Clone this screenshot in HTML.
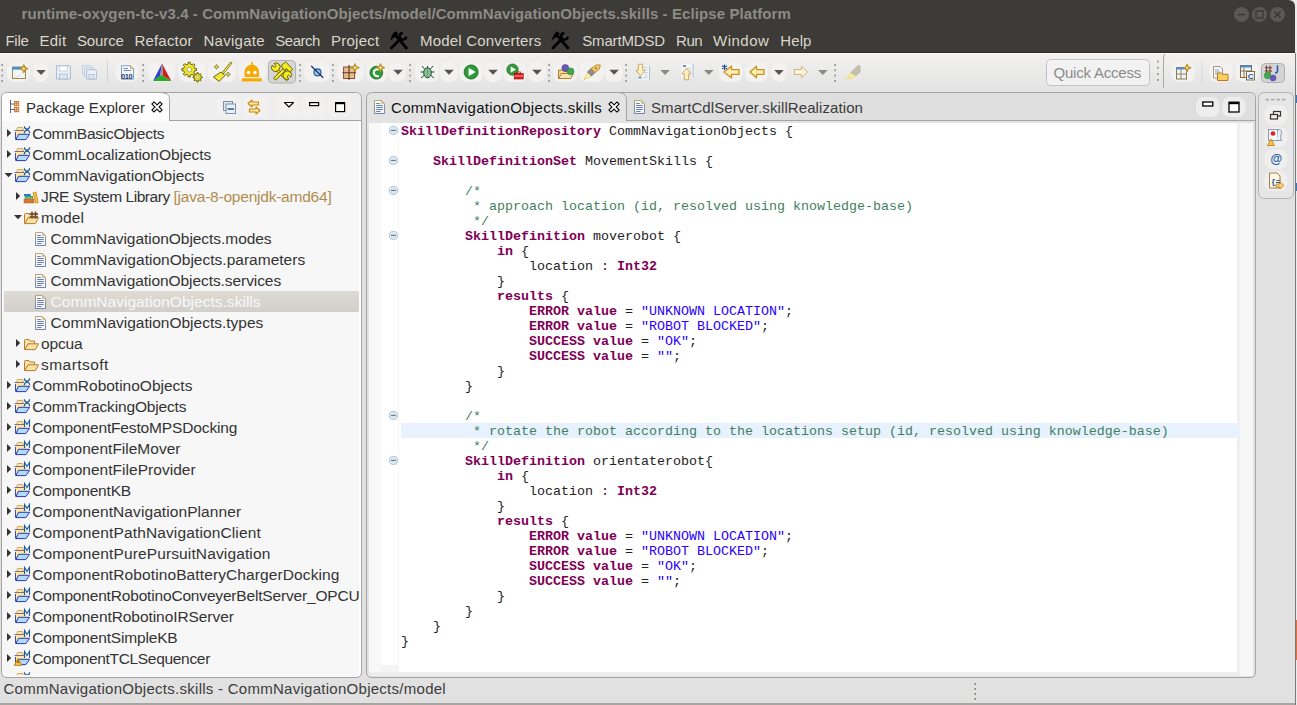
<!DOCTYPE html>
<html><head><meta charset="utf-8"><title>Eclipse</title>
<style>
html,body{margin:0;padding:0;width:1297px;height:705px;overflow:hidden;background:#e1e1e1}
svg{display:block}

</style></head><body>
<svg width="1297" height="705" viewBox="0 0 1297 705">
<rect x="0" y="0" width="1297" height="705" fill="#ececec"/>
<rect x="1295" y="95" width="2" height="8" fill="#3b78c0"/>
<rect x="1295" y="183" width="2" height="8" fill="#3b78c0"/>
<rect x="1295" y="620" width="2" height="40" fill="#e07040"/>
<path d="M0 0 H1288 Q1295 0 1295 7 V705 H0 Z" fill="#e1e1e1"/>
<path d="M0 0 H1288 Q1295 0 1295 7 V53 H0 Z" fill="#3c3b37"/>
<rect x="0" y="52" width="1295" height="1" fill="#2e2d2a"/>
<circle cx="1241.5" cy="14.5" r="7.5" fill="#5a5955"/>
<circle cx="1259.5" cy="14.5" r="7.5" fill="#5a5955"/>
<circle cx="1277.5" cy="14.5" r="7.5" fill="#5a5955"/>
<path d="M1238 14.5 H1245" stroke="#35342f" stroke-width="1.4"/>
<rect x="1256" y="11" width="7" height="7" fill="none" stroke="#35342f" stroke-width="1.2"/>
<path d="M1274.5 11.5 L1280.5 17.5 M1280.5 11.5 L1274.5 17.5" stroke="#35342f" stroke-width="1.4"/>
<defs><linearGradient id="tbg" x1="0" y1="0" x2="0" y2="1"><stop offset="0" stop-color="#f2f1f0"/><stop offset="1" stop-color="#e3e3e3"/></linearGradient></defs>
<rect x="0" y="53" width="1295" height="39" fill="url(#tbg)"/>
<rect x="0" y="53" width="1295" height="1" fill="#fafafa"/>
<path d="M1.5 98.5 Q1.5 92.5 7.5 92.5 H355.5 Q361.5 92.5 361.5 98.5 V672 Q361.5 677.5 356 677.5 H7 Q1.5 677.5 1.5 672 Z" fill="#f7f7f7" stroke="#a4a4a4"/>
<path d="M2 98.5 Q2 93 7.5 93 H355.5 Q361 93 361 98.5 V120 H2 Z" fill="#eeeeee"/>
<rect x="2" y="120" width="359" height="1" fill="#a4a4a4"/>
<path d="M2 121 V98.5 Q2 93 7.5 93 H163 Q169.5 93 169.5 99.5 V121 Z" fill="#fdfdfd"/>
<path d="M169.5 121 V99.5 Q169.5 93 163 93" fill="none" stroke="#a4a4a4"/>
<defs><linearGradient id="sel" x1="0" y1="0" x2="0" y2="1"><stop offset="0" stop-color="#dedbd7"/><stop offset="1" stop-color="#d2cfcb"/></linearGradient></defs>
<rect x="4" y="291" width="355" height="21" fill="url(#sel)"/>
<path d="M366.5 98.5 Q366.5 92.5 372.5 92.5 H1249.5 Q1255.5 92.5 1255.5 98.5 V672 Q1255.5 677.5 1250 677.5 H372 Q366.5 677.5 366.5 672 Z" fill="#e3e3e3" stroke="#a4a4a4"/>
<path d="M626.5 121 V99.5 Q626.5 93 633 93 H1249.5 Q1255 93 1255 98.5 V120 Z" fill="#dedede"/>
<path d="M626.5 120.5 V99.5 Q626.5 93 620 93" fill="none" stroke="#a4a4a4"/>
<rect x="626" y="120" width="629" height="1" fill="#a4a4a4"/>
<rect x="369" y="123" width="884" height="549" fill="#ffffff"/>
<rect x="369" y="123" width="12" height="549" fill="#f8f8f8"/>
<rect x="381" y="665" width="18" height="7" fill="#f4f4f4"/>
<rect x="398" y="123" width="1" height="542" fill="#f6f6f6"/>
<rect x="369" y="672" width="884" height="4" fill="#ededed"/>
<rect x="1237" y="123" width="3" height="549" fill="#efefef"/>
<rect x="1240" y="123" width="13" height="553" fill="#f7f7f7"/>
<rect x="401" y="423" width="839" height="15" fill="#e8f2fe"/>
<path d="M1258.5 98.5 Q1258.5 92.5 1264.5 92.5 H1287.5 Q1293.5 92.5 1293.5 98.5 V192 Q1293.5 198.5 1287 198.5 H1265 Q1258.5 198.5 1258.5 192 Z" fill="#e6e6e6" stroke="#b4b4b4"/>
<rect x="1295" y="53" width="1" height="652" fill="#7a7a7a"/>
<rect x="359" y="121" width="2" height="552" fill="#ffffff"/>
<rect x="0" y="703" width="1295" height="2" fill="#a8a5a1"/>
<rect x="974.5" y="683" width="1.5" height="2" fill="#8a877f"/>
<rect x="974.5" y="688" width="1.5" height="2" fill="#8a877f"/>
<rect x="974.5" y="693" width="1.5" height="2" fill="#8a877f"/>
<rect x="974.5" y="698" width="1.5" height="2" fill="#8a877f"/>
<defs><linearGradient id="docg" x1="0" y1="0" x2="0" y2="1"><stop offset="0" stop-color="#b8a868"/><stop offset="1" stop-color="#7282aa"/></linearGradient></defs><g transform="translate(390,31)">
<line x1="1.4" y1="17" x2="9.8" y2="8.6" stroke="#000" stroke-width="2.8" stroke-linecap="round"/>
<path d="M16.29 5.59 A3.3 3.3 0 1 1 12.71 2.01" fill="none" stroke="#000" stroke-width="2.3"/>
<line x1="6.8" y1="5.6" x2="16.4" y2="17" stroke="#000" stroke-width="2.8" stroke-linecap="round"/>
<path d="M0.3 9.8 Q1.2 3.5 5.4 0.2 L8.4 2.6 L6.6 5.6 Q3 6.5 0.3 9.8 Z" fill="#000"/>
</g><g transform="translate(551.5,31)">
<line x1="1.4" y1="17" x2="9.8" y2="8.6" stroke="#000" stroke-width="2.8" stroke-linecap="round"/>
<path d="M16.29 5.59 A3.3 3.3 0 1 1 12.71 2.01" fill="none" stroke="#000" stroke-width="2.3"/>
<line x1="6.8" y1="5.6" x2="16.4" y2="17" stroke="#000" stroke-width="2.8" stroke-linecap="round"/>
<path d="M0.3 9.8 Q1.2 3.5 5.4 0.2 L8.4 2.6 L6.6 5.6 Q3 6.5 0.3 9.8 Z" fill="#000"/>
</g><rect x="1.4500000000000002" y="64.0" width="1.5" height="2" rx="0.5" fill="#8c8a84"/><rect x="1.4500000000000002" y="69.3" width="1.5" height="2" rx="0.5" fill="#8c8a84"/><rect x="1.4500000000000002" y="74.6" width="1.5" height="2" rx="0.5" fill="#8c8a84"/><rect x="1.4500000000000002" y="79.9" width="1.5" height="2" rx="0.5" fill="#8c8a84"/><rect x="7" y="62" width="23.2" height="20" rx="8" fill="#f3f2f1"/><rect x="12.5" y="67" width="13" height="11.5" fill="#eef6fc" stroke="#a08a50" stroke-width="1"/><rect x="12.5" y="67" width="13" height="2.6" fill="#3d8fd8"/><path d="M14 77.5 Q20 77 22 72" stroke="#f0e0b0" stroke-width="1" fill="none"/><path d="M23.8 64.80000000000001 L24.856 67.644 L27.700000000000003 68.7 L24.856 69.756 L23.8 72.6 L22.744 69.756 L19.9 68.7 L22.744 67.644 Z" fill="#fff6c0" stroke="#c09020" stroke-width="1.3" stroke-linejoin="round"/><rect x="33" y="62" width="15.600000000000001" height="20" rx="8" fill="#f3f2f1"/><path d="M36.3 70 H45.9 L41.099999999999994 75 Z" fill="#555555"/><path d="M56.6 65.7 H69.6 L70.4 66.5 V79 H56.6 Z" fill="#eef2f8" stroke="#a9b9d3" stroke-width="1"/><rect x="59.5" y="66" width="8" height="5" fill="#ffffff" stroke="#c0cce0" stroke-width="0.8"/><rect x="59.5" y="74" width="8" height="5" fill="#dde5f0" stroke="#a9b9d3" stroke-width="0.8"/><path d="M82.5 65.7 H91 L92 67 V74 H82.5 Z" fill="#eef2f8" stroke="#b8c6dc" stroke-width="0.9"/><path d="M84.5 67.7 H93 L94 69 V76 H84.5 Z" fill="#eef2f8" stroke="#b8c6dc" stroke-width="0.9"/><path d="M86.6 69.7 H95.5 L96.4 70.5 V79 H86.6 Z" fill="#eef2f8" stroke="#a9b9d3" stroke-width="1"/><rect x="89" y="74.5" width="5" height="4.5" fill="#dde5f0" stroke="#a9b9d3" stroke-width="0.8"/><rect x="107" y="61" width="1" height="21.5" fill="#d3d3d3"/><rect x="115" y="62" width="23.69999999999999" height="20" rx="8" fill="#f3f2f1"/><path d="M121.5 65.7 H130.5 L133.5 68.7 V79.2 H121.5 Z" fill="#f4f8fc" stroke="#8aa0c0" stroke-width="1"/><path d="M130.5 65.7 V68.7 H133.5" fill="#e8d090" stroke="#c0a060" stroke-width="0.8"/><path d="M123.5 68.5 H128 M123.5 70.5 H131" stroke="#6080b0" stroke-width="0.9"/><text x="121" y="79" font-family="Liberation Sans" font-size="7.5px" font-weight="700" fill="#1a3a70" letter-spacing="-0.4">010</text><rect x="142.45" y="64.0" width="1.5" height="2" rx="0.5" fill="#8c8a84"/><rect x="142.45" y="69.3" width="1.5" height="2" rx="0.5" fill="#8c8a84"/><rect x="142.45" y="74.6" width="1.5" height="2" rx="0.5" fill="#8c8a84"/><rect x="142.45" y="79.9" width="1.5" height="2" rx="0.5" fill="#8c8a84"/><rect x="148" y="62" width="27" height="20" rx="8" fill="#f3f2f1"/><path d="M162 63.5 L153 81 L160 76 Z" fill="#3040c8"/><path d="M162 63.5 L171.3 81 L163 76 Z" fill="#d02020"/><path d="M153 81 L171.3 81 L163 76 L160 76 Z" fill="#20b020"/><path d="M162 63.5 L160 76 L163 76 Z" fill="#909090"/><rect x="178" y="62" width="28" height="20" rx="8" fill="#f3f2f1"/><path d="M194.67 68.40 L196.53 68.59 L196.53 70.61 L194.67 70.80 L193.92 72.62 L195.10 74.07 L193.67 75.50 L192.22 74.32 L190.40 75.07 L190.21 76.93 L188.19 76.93 L188.00 75.07 L186.18 74.32 L184.73 75.50 L183.30 74.07 L184.48 72.62 L183.73 70.80 L181.87 70.61 L181.87 68.59 L183.73 68.40 L184.48 66.58 L183.30 65.13 L184.73 63.70 L186.18 64.88 L188.00 64.13 L188.19 62.27 L190.21 62.27 L190.40 64.13 L192.22 64.88 L193.67 63.70 L195.10 65.13 L193.92 66.58 Z" fill="#ece430" stroke="#5a5400" stroke-width="0.9" stroke-linejoin="round"/><circle cx="189.2" cy="69.6" r="2.3" fill="#ffffff" stroke="#8a8400" stroke-width="0.6"/><path d="M200.92 76.57 L202.16 76.67 L202.16 77.93 L200.92 78.03 L200.46 79.13 L201.27 80.08 L200.38 80.97 L199.43 80.16 L198.33 80.62 L198.23 81.86 L196.97 81.86 L196.87 80.62 L195.77 80.16 L194.82 80.97 L193.93 80.08 L194.74 79.13 L194.28 78.03 L193.04 77.93 L193.04 76.67 L194.28 76.57 L194.74 75.47 L193.93 74.52 L194.82 73.63 L195.77 74.44 L196.87 73.98 L196.97 72.74 L198.23 72.74 L198.33 73.98 L199.43 74.44 L200.38 73.63 L201.27 74.52 L200.46 75.47 Z" fill="#ece430" stroke="#5a5400" stroke-width="0.9" stroke-linejoin="round"/><circle cx="197.6" cy="77.3" r="1.4" fill="#f4f4e0" stroke="#8a8400" stroke-width="0.5"/><rect x="208" y="62" width="28" height="20" rx="8" fill="#f3f2f1"/><path d="M231 63 L222.5 73.5" stroke="#5a5400" stroke-width="2.4" stroke-linecap="round"/><path d="M231 63 L222.5 73.5" stroke="#f0e840" stroke-width="1.2" stroke-linecap="round"/><path d="M221 72 L225 75.5 L219 81.5 L213.5 77 Z" fill="#f0e840" stroke="#5a5400" stroke-width="0.9"/><path d="M216.5 64.5 l0.8 1.6 1.6 0.8 -1.6 0.8 -0.8 1.6 -0.8 -1.6 -1.6 -0.8 1.6 -0.8 Z M228 72 l0.8 1.6 1.6 0.8 -1.6 0.8 -0.8 1.6 -0.8 -1.6 -1.6 -0.8 1.6 -0.8 Z" fill="#f0e840" stroke="#5a5400" stroke-width="0.6"/><rect x="238" y="62" width="28" height="20" rx="8" fill="#f3f2f1"/><rect x="251" y="62" width="1.6" height="3" fill="#f7a900"/><path d="M244.5 77 V72 A7.3 7.3 0 0 1 259.1 72 V77 Z" fill="#f7a900"/><rect x="241.8" y="78.3" width="20" height="3.2" fill="#f7a900"/><circle cx="248.5" cy="72.5" r="1.8" fill="#fff"/><circle cx="255" cy="72.5" r="1.8" fill="#fff"/><rect x="268.5" y="60.5" width="27" height="22.5" rx="4" fill="#d6d6d6" stroke="#b0b0b0"/><g stroke="#5a5400" stroke-width="0.9" fill="#f4ec20" stroke-linejoin="round"><path d="M277 68.3 L288.3 79.2 L286.6 80.8 L275.4 69.9 Z"/><path d="M272.2 65.2 L274.4 67.3 L276.2 65.6 L274 63.5 A4 4 0 0 1 279.5 69 L277.5 71 A4 4 0 0 1 272.2 65.2 Z"/><path d="M290.8 77.2 L288.6 75.1 L286.8 76.8 L289 78.9 A4 4 0 0 1 283.5 73.4 L285.5 71.4 A4 4 0 0 1 290.8 77.2 Z"/></g><g stroke="#5a5400" stroke-width="0.9" fill="#f4ec20" stroke-linejoin="round"><path d="M273.6 78.2 L284.2 67.6 L286.2 69.6 L275.6 80.2 Z"/><path d="M281.2 65.6 L285.6 61.8 L292.6 69.2 L290 72.2 L286.6 68.8 L284.2 70.4 Z"/></g><rect x="299.35" y="64.0" width="1.5" height="2" rx="0.5" fill="#8c8a84"/><rect x="299.35" y="69.3" width="1.5" height="2" rx="0.5" fill="#8c8a84"/><rect x="299.35" y="74.6" width="1.5" height="2" rx="0.5" fill="#8c8a84"/><rect x="299.35" y="79.9" width="1.5" height="2" rx="0.5" fill="#8c8a84"/><rect x="304" y="62" width="26" height="20" rx="8" fill="#f3f2f1"/><circle cx="317.5" cy="72.4" r="3.4" fill="#a8cce4" stroke="#2a6aa8" stroke-width="1.4"/><path d="M311.2 66 L323.2 77.8" stroke="#1a2a70" stroke-width="1.2"/><rect x="332.15" y="64.0" width="1.5" height="2" rx="0.5" fill="#8c8a84"/><rect x="332.15" y="69.3" width="1.5" height="2" rx="0.5" fill="#8c8a84"/><rect x="332.15" y="74.6" width="1.5" height="2" rx="0.5" fill="#8c8a84"/><rect x="332.15" y="79.9" width="1.5" height="2" rx="0.5" fill="#8c8a84"/><rect x="337" y="62" width="27" height="20" rx="8" fill="#f3f2f1"/><rect x="343.6" y="67" width="11" height="11.5" fill="#e0c090" stroke="#8a4a30" stroke-width="1"/><path d="M349 65 V80 M342.5 72.7 H356" stroke="#6a3020" stroke-width="1.1"/><path d="M355 63.800000000000004 L356.056 66.644 L358.90000000000003 67.7 L356.056 68.756 L355 71.6 L353.944 68.756 L351.09999999999997 67.7 L353.944 66.644 Z" fill="#fff6c0" stroke="#c09020" stroke-width="1.3" stroke-linejoin="round"/><rect x="366" y="62" width="22" height="20" rx="8" fill="#f3f2f1"/><circle cx="376.3" cy="72.7" r="6.4" fill="#2e9a3a" stroke="#1a6a24" stroke-width="0.8"/><path d="M378.9 69.6 A3.5 3.5 0 1 0 378.9 75.8" fill="none" stroke="#ffffff" stroke-width="2"/><path d="M380.5 63.800000000000004 L381.556 66.644 L384.40000000000003 67.7 L381.556 68.756 L380.5 71.6 L379.444 68.756 L376.59999999999997 67.7 L379.444 66.644 Z" fill="#fff6c0" stroke="#c09020" stroke-width="1.3" stroke-linejoin="round"/><rect x="389" y="62" width="17" height="20" rx="8" fill="#f3f2f1"/><path d="M393.2 69.8 H402.8 L398.0 74.8 Z" fill="#555555"/><rect x="409.25" y="64.0" width="1.5" height="2" rx="0.5" fill="#8c8a84"/><rect x="409.25" y="69.3" width="1.5" height="2" rx="0.5" fill="#8c8a84"/><rect x="409.25" y="74.6" width="1.5" height="2" rx="0.5" fill="#8c8a84"/><rect x="409.25" y="79.9" width="1.5" height="2" rx="0.5" fill="#8c8a84"/><rect x="415" y="62" width="24" height="20" rx="8" fill="#f3f2f1"/><g stroke="#1a5040" stroke-width="1" fill="none"><path d="M422 66 L424.5 69 M433 66 L430.5 69 M420.5 72 H424 M434.5 72 H431 M421 78 L424 75.5 M434 78 L431 75.5 M427.5 66 V68"/></g><ellipse cx="427.5" cy="72.8" rx="3.8" ry="5" fill="#90c090" stroke="#1a5040" stroke-width="1"/><path d="M427.5 68 V77.5" stroke="#5a8a60" stroke-width="0.7"/><rect x="440" y="62" width="18" height="20" rx="8" fill="#f3f2f1"/><path d="M444.2 69.8 H453.8 L449.0 74.8 Z" fill="#555555"/><rect x="459" y="62" width="24" height="20" rx="8" fill="#f3f2f1"/><circle cx="471.1" cy="72" r="7" fill="#2e9a3a" stroke="#1a6a24" stroke-width="0.9"/><path d="M468.6 67.7 L475.6 72 L468.6 76.3 Z" fill="#ffffff"/><rect x="484" y="62" width="18" height="20" rx="8" fill="#f3f2f1"/><path d="M488.2 69.8 H497.8 L493.0 74.8 Z" fill="#555555"/><rect x="503" y="62" width="24" height="20" rx="8" fill="#f3f2f1"/><circle cx="512.5" cy="69.6" r="5.6" fill="#2e9a3a" stroke="#1a6a24" stroke-width="0.8"/><path d="M510.6 66.4 L516 69.6 L510.6 72.8 Z" fill="#ffffff"/><rect x="514.2" y="73.5" width="9" height="5.5" fill="#e02020" stroke="#a00000" stroke-width="0.6"/><rect x="516.8" y="72" width="3.8" height="2" fill="none" stroke="#c01010" stroke-width="0.8"/><path d="M514.5 76 H523" stroke="#ffffff" stroke-width="0.6"/><rect x="528" y="62" width="18" height="20" rx="8" fill="#f3f2f1"/><path d="M532.2 69.8 H541.8000000000001 L537.0 74.8 Z" fill="#555555"/><rect x="548.35" y="64.0" width="1.5" height="2" rx="0.5" fill="#8c8a84"/><rect x="548.35" y="69.3" width="1.5" height="2" rx="0.5" fill="#8c8a84"/><rect x="548.35" y="74.6" width="1.5" height="2" rx="0.5" fill="#8c8a84"/><rect x="548.35" y="79.9" width="1.5" height="2" rx="0.5" fill="#8c8a84"/><rect x="553" y="62" width="25" height="20" rx="8" fill="#f3f2f1"/><path d="M558.5 70 H563 L564.5 71.5 H570 V78.5 H558.5 Z" fill="#f0d890" stroke="#b07a30" stroke-width="1"/><path d="M558.5 78.5 L561.5 73.5 H573.5 L570.5 78.5 Z" fill="#f8e4a8" stroke="#b07a30" stroke-width="1"/><circle cx="565.3" cy="68" r="3.4" fill="#6a58b8" stroke="#4a3890" stroke-width="0.6"/><circle cx="570.5" cy="71.3" r="3.4" fill="#40a850" stroke="#208030" stroke-width="0.6"/><rect x="579" y="62" width="25" height="20" rx="8" fill="#f3f2f1"/><path d="M584 79.5 L588 72.5 L591.5 76 Z" fill="#fff8c0" stroke="#e8c040" stroke-width="0.8"/><path d="M587.5 72 L591 68.5 L595 72.5 L591.5 76 Z" fill="#909090" stroke="#606060" stroke-width="0.7"/><path d="M591 68.5 L596.5 64.8 L600.3 65 L599.5 69 L595 72.5 Z" fill="#f0c860" stroke="#b08020" stroke-width="0.8"/><circle cx="596" cy="68.3" r="0.8" fill="#204080"/><rect x="605" y="62" width="18" height="20" rx="8" fill="#f3f2f1"/><path d="M609.3 69.8 H618.9 L614.0999999999999 74.8 Z" fill="#555555"/><rect x="625.45" y="64.0" width="1.5" height="2" rx="0.5" fill="#8c8a84"/><rect x="625.45" y="69.3" width="1.5" height="2" rx="0.5" fill="#8c8a84"/><rect x="625.45" y="74.6" width="1.5" height="2" rx="0.5" fill="#8c8a84"/><rect x="625.45" y="79.9" width="1.5" height="2" rx="0.5" fill="#8c8a84"/><rect x="638.5" y="66" width="11" height="13.5" fill="#f4f6f8"/><path d="M649.5 66 V79.5" stroke="#a8b8c8" stroke-width="0.9"/><path d="M643.5 67.5 H647.5 M644 70 H647.5 M644 72.5 H647.5 M644 75 H647.5 M643 77.5 H647.5" stroke="#c0cad8" stroke-width="0.9"/><rect x="638.5" y="76.5" width="3" height="2" fill="#7090c0"/><path d="M638.3 64.2 H642.7 V70.2 H645 L640.5 75.8 L636 70.2 H638.3 Z" fill="#fff0c8" stroke="#d0a860" stroke-width="1"/><path d="M660.3 70 H669.9 L665.0999999999999 75 Z" fill="#8a8a8a"/><rect x="681.5" y="64" width="11.5" height="13.5" fill="#f4f6f8"/><path d="M693 64 V77.5" stroke="#a8b8c8" stroke-width="0.9"/><path d="M686 68.5 H691 M686 71 H691 M686 73.5 H691 M686 76 H691" stroke="#c0cad8" stroke-width="0.9"/><rect x="683" y="65" width="3" height="2" fill="#7090c0"/><path d="M684.3 79.8 H688.7 V73.8 H691 L686.5 68.2 L682 73.8 H684.3 Z" fill="#fff0c8" stroke="#d0a860" stroke-width="1"/><path d="M704 70 H713.6 L708.8 75 Z" fill="#8a8a8a"/><rect x="719" y="62" width="23.399999999999977" height="20" rx="8" fill="#f3f2f1"/><path d="M739 69.7 H731.5 V66.2 L723.8 72 L731.5 77.8 V74.3 H739 Z" fill="#fff0b0" stroke="#c89020" stroke-width="1.3" stroke-linejoin="round"/><path d="M724.5 64.5 V70 M722 65.8 L727 68.8 M727 65.8 L722 68.8" stroke="#1a4a90" stroke-width="1.1"/><rect x="745" y="62" width="23" height="20" rx="8" fill="#f3f2f1"/><path d="M764 69.7 H756.5 V66.2 L750 72 L756.5 77.8 V74.3 H764 Z" fill="#fff0b0" stroke="#c89020" stroke-width="1.3" stroke-linejoin="round"/><rect x="771.4" y="62" width="15.100000000000023" height="20" rx="8" fill="#f3f2f1"/><path d="M774.2 69.9 H783.8000000000001 L779.0 74.9 Z" fill="#555555"/><path d="M794.5 69.5 H801.5 V66.5 L807.5 72 L801.5 77.5 V74.5 H794.5 Z" fill="#fbf3dc" stroke="#d4b47c" stroke-width="1" stroke-linejoin="round"/><path d="M818 70 H827.6 L822.8 75 Z" fill="#8a8a8a"/><rect x="834.35" y="64.0" width="1.5" height="2" rx="0.5" fill="#8c8a84"/><rect x="834.35" y="69.3" width="1.5" height="2" rx="0.5" fill="#8c8a84"/><rect x="834.35" y="74.6" width="1.5" height="2" rx="0.5" fill="#8c8a84"/><rect x="834.35" y="79.9" width="1.5" height="2" rx="0.5" fill="#8c8a84"/><path d="M844 78.5 H852" stroke="#f0e080" stroke-width="1"/><path d="M848 78 L851 72.5 L856 75.5 L852.5 78.5 Z" fill="#f4ec9a" stroke="#e8d870"  stroke-width="0.6"/><path d="M851 72.5 L858 65.5 L860 66 V72 L856 75.5 Z" fill="#c4c0b0" stroke="#a8a498" stroke-width="0.6"/><rect x="1046.5" y="59.5" width="103" height="26" rx="4" fill="#f2f2f2" stroke="#c4c4c4"/><rect x="1157.15" y="60.5" width="1.5" height="2" rx="0.5" fill="#8c8a84"/><rect x="1157.15" y="66.7" width="1.5" height="2" rx="0.5" fill="#8c8a84"/><rect x="1157.15" y="72.9" width="1.5" height="2" rx="0.5" fill="#8c8a84"/><rect x="1157.15" y="79.1" width="1.5" height="2" rx="0.5" fill="#8c8a84"/><path d="M1165 54 Q1163.5 55.5 1163.5 58 V88" stroke="#a8a8a8" fill="none"/><rect x="1171" y="62" width="23.799999999999955" height="20" rx="8" fill="#f3f2f1"/><rect x="1176.5" y="67.5" width="10" height="11.5" fill="#f0f4f8" stroke="#8a7a50" stroke-width="1"/><rect x="1176.5" y="67.5" width="10" height="2" fill="#4a90d8"/><path d="M1181 69.5 V79 M1176.5 74 H1186.5" stroke="#8a7a50" stroke-width="0.9"/><path d="M1187.2 64.2 L1188.16 66.84 L1190.8 67.8 L1188.16 68.75999999999999 L1187.2 71.39999999999999 L1186.24 68.75999999999999 L1183.6000000000001 67.8 L1186.24 66.84 Z" fill="#fff6c0" stroke="#c09020" stroke-width="1.3" stroke-linejoin="round"/><rect x="1201.5" y="62" width="1" height="21.5" fill="#d8d8d8"/><rect x="1209" y="62" width="23.700000000000045" height="20" rx="8" fill="#f3f2f1"/><path d="M1213.5 66.5 H1220 L1222.5 69 V78 H1213.5 Z" fill="#f4f8fc" stroke="#a09070" stroke-width="0.9"/><path d="M1215 70 H1219 M1215 72 H1220 M1215 74 H1218" stroke="#7090c0" stroke-width="0.8"/><path d="M1217.5 73 H1221.5 L1222.5 74.3 H1228 V80.5 H1217.5 Z" fill="#fcd060" stroke="#c07820" stroke-width="1"/><rect x="1235" y="62" width="23.799999999999955" height="20" rx="8" fill="#f3f2f1"/><rect x="1240.5" y="65.5" width="11" height="12" fill="#f0f4f8" stroke="#806a40" stroke-width="1"/><rect x="1240.5" y="65.5" width="11" height="2" fill="#4a90d8"/><path d="M1244 67.5 V77.5 M1240.5 71 H1251.5" stroke="#806a40" stroke-width="0.9"/><rect x="1246.5" y="71.5" width="8" height="8.5" fill="#f4f8fc" stroke="#806a40" stroke-width="1"/><text x="1247.8" y="79" font-family="Liberation Sans" font-weight="700" font-size="8px" fill="#1a5aa8">C</text><rect x="1261.5" y="63.5" width="23" height="19" rx="4" fill="#d4d4d4" stroke="#b0b0b0"/><path d="M1266.5 65.5 V73 M1270 65.5 V73 M1264.8 67.8 H1272 M1264.8 71 H1272" stroke="#7a4030" stroke-width="1.1"/><path d="M1277.5 65.3 V71 Q1277.5 73 1275 73" stroke="#1a5aa8" stroke-width="1.5" fill="none"/><circle cx="1273" cy="78" r="3.3" fill="#6a58b8"/><circle cx="1267.6" cy="75.5" r="3.3" fill="#40a850" stroke="#208030" stroke-width="0.5"/><path d="M10.5 100 V113 M10.5 104 H14 M10.5 109.5 H14" stroke="#5a6478" stroke-width="1"/><rect x="14" y="101" width="5.2" height="5.2" fill="#c8783a"/><rect x="14" y="107" width="5.2" height="5.2" fill="#c8783a"/><g fill="#f4d8b0"><rect x="15" y="102" width="1.2" height="1.2"/><rect x="17" y="102" width="1.2" height="1.2"/><rect x="15" y="104" width="1.2" height="1.2"/><rect x="17" y="104" width="1.2" height="1.2"/><rect x="15" y="108" width="1.2" height="1.2"/><rect x="17" y="108" width="1.2" height="1.2"/><rect x="15" y="110" width="1.2" height="1.2"/><rect x="17" y="110" width="1.2" height="1.2"/></g><path d="M154 104 L160 110 M160 104 L154 110" stroke="#000" stroke-width="4" stroke-linecap="square"/><path d="M154 104 L160 110 M160 104 L154 110" stroke="#fff" stroke-width="1.9" stroke-linecap="square"/><rect x="217" y="96" width="23" height="21" rx="8" fill="#f2f1f0"/><rect x="223.5" y="101.5" width="9" height="9" fill="#dbe8ec" stroke="#7e8fb0" stroke-width="1"/><rect x="226" y="104" width="9.5" height="9.5" fill="#e8f2f6" stroke="#7e8fb0" stroke-width="1"/><path d="M227.5 109 H234" stroke="#1a4a90" stroke-width="1.4"/><rect x="243" y="96" width="25" height="21" rx="8" fill="#f2f1f0"/><path d="M258.5 102 H252 V100 L248 103.5 L252 107 V105 H258.5 Z M249.5 109 H256 V107 L260 110.5 L256 114 V112 H249.5 Z" fill="#fde6a0" stroke="#c88a10" stroke-width="1.1" stroke-linejoin="round"/><rect x="276" y="96" width="23" height="21" rx="8" fill="#f2f1f0"/><path d="M284.5 102.5 H293.5 L289 107 Z" fill="#ffffff" stroke="#000" stroke-width="1.1" stroke-linejoin="round"/><rect x="301" y="96" width="23" height="21" rx="8" fill="#f2f1f0"/><rect x="309.6" y="102.6" width="9" height="3" fill="#fff" stroke="#000" stroke-width="1.2"/><rect x="327" y="96" width="25" height="21" rx="8" fill="#f2f1f0"/><rect x="335.6" y="102.6" width="9" height="9" fill="#fff" stroke="#000" stroke-width="1.2"/><rect x="335.6" y="102.6" width="9" height="1.6" fill="#000"/><path d="M374.5 100.5 H381.5 L384.5 103.5 V113.5 H374.5 Z" fill="#f4f8fe" stroke="url(#docg)" stroke-width="1"/><path d="M381.5 100.8 V103.5 H384.2 Z" fill="#e4c070" stroke="#d0b070" stroke-width="0.6"/><path d="M376.2 103.5 H379.8 M376.2 105.5 H382.8 M376.2 107.5 H382.8 M376.2 109.5 H382.8 M376.2 111.5 H380.5" stroke="#6078b0" stroke-width="0.95"/><path d="M611 104 L617 110 M617 104 L611 110" stroke="#000" stroke-width="4" stroke-linecap="square"/><path d="M611 104 L617 110 M617 104 L611 110" stroke="#fff" stroke-width="1.9" stroke-linecap="square"/><path d="M634.5 100.5 H641.5 L644.5 103.5 V113.5 H634.5 Z" fill="#f4f8fe" stroke="url(#docg)" stroke-width="1"/><path d="M641.5 100.8 V103.5 H644.2 Z" fill="#e4c070" stroke="#d0b070" stroke-width="0.6"/><path d="M636.2 103.5 H639.8 M636.2 105.5 H642.8 M636.2 107.5 H642.8 M636.2 109.5 H642.8 M636.2 111.5 H640.5" stroke="#6078b0" stroke-width="0.95"/><rect x="1196" y="97" width="23.5" height="20" rx="8" fill="#ededed"/><rect x="1202.8" y="102" width="10" height="4" fill="#fff" stroke="#000" stroke-width="1.3"/><rect x="1222" y="97" width="23.5" height="20" rx="8" fill="#ededed"/><rect x="1229" y="102.2" width="10" height="9.8" fill="#fff" stroke="#000" stroke-width="1.3"/><rect x="1229" y="102.2" width="10" height="2" fill="#000"/><rect x="1265.5" y="98.8" width="3.5" height="1.6" fill="#a8a8a8"/><rect x="1271" y="98.8" width="3.5" height="1.6" fill="#a8a8a8"/><rect x="1276.5" y="98.8" width="3.5" height="1.6" fill="#a8a8a8"/><rect x="1282" y="98.8" width="3.5" height="1.6" fill="#a8a8a8"/><rect x="1264.5" y="105.3" width="23" height="19.6" rx="8" fill="#f0efee"/><rect x="1273.5" y="111.5" width="7" height="4.5" fill="none" stroke="#333" stroke-width="1.2"/><rect x="1270.5" y="114.5" width="7" height="4.5" fill="#f0efee" stroke="#333" stroke-width="1.2"/><rect x="1264.5" y="127" width="23" height="20" rx="8" fill="#f0efee"/><rect x="1268.5" y="129.5" width="9" height="11" fill="#f4f8fc" stroke="#7e8fb0" stroke-width="0.9"/><circle cx="1273" cy="133.5" r="2.3" fill="#e02020"/><path d="M1278 129.5 Q1283 129.5 1281 135 Q1280 138 1281.5 140.5 H1277" fill="#e8f0f8" stroke="#7e8fb0" stroke-width="0.9"/><path d="M1271 139 L1274.5 145.5 H1267.5 Z" fill="#f8c840" stroke="#c08020" stroke-width="0.9" stroke-linejoin="round"/><rect x="1264.5" y="149.5" width="23" height="19.6" rx="8" fill="#f0efee"/><text x="1270.3" y="163" font-family="Liberation Sans" font-size="12px" font-weight="700" font-style="italic" fill="#1a5aa8">@</text><rect x="1264.5" y="171" width="23" height="20" rx="8" fill="#f0efee"/><path d="M1269.5 173 H1277 L1280 176 V188 H1269.5 Z" fill="#fff8e8" stroke="#a08040" stroke-width="1"/><text x="1271" y="184" font-family="Liberation Mono" font-size="8px" font-weight="700" fill="#1a4a90">{=</text><path d="M1276 184 H1280 V182 L1284 185.5 L1280 189 V187 H1276 Z" fill="#f8d070" stroke="#c08020" stroke-width="0.8"/>
<defs><clipPath id="treeclip"><rect x="2" y="121" width="357.5" height="554"/></clipPath></defs>
<g clip-path="url(#treeclip)"><path d="M7 129 L11.2 133 L7 137 Z" fill="#333333"/><path d="M17 130.5 V128.5 Q17 127.5 18 127.5 H22 Q23 127.5 23 128.5 V130.5" fill="#fbe7b0" stroke="#d8a858" stroke-width="1"/><path d="M14.5 130.5 H24" stroke="#7a6a90" stroke-width="1"/><rect x="15.2" y="131" width="11.5" height="8.5" fill="#fde8a8"/><path d="M15.5 132 V139.5" stroke="#3a4ab8" stroke-width="1"/><path d="M18.4 134.3 H29.6 L25.9 139.6 H16 Z" fill="#b0dcfa" stroke="#2a3ab8" stroke-width="1" stroke-linejoin="round"/><path d="M24.3 126.2 C24.8 130.2 29.2 130.2 29.7 126.2 M24.3 133.2 C24.8 129.2 29.2 129.2 29.7 133.2" fill="none" stroke="#1c5a98" stroke-width="1.2"/><path d="M7 150 L11.2 154 L7 158 Z" fill="#333333"/><path d="M17 151.5 V149.5 Q17 148.5 18 148.5 H22 Q23 148.5 23 149.5 V151.5" fill="#fbe7b0" stroke="#d8a858" stroke-width="1"/><path d="M14.5 151.5 H24" stroke="#7a6a90" stroke-width="1"/><rect x="15.2" y="152" width="11.5" height="8.5" fill="#fde8a8"/><path d="M15.5 153 V160.5" stroke="#3a4ab8" stroke-width="1"/><path d="M18.4 155.3 H29.6 L25.9 160.6 H16 Z" fill="#b0dcfa" stroke="#2a3ab8" stroke-width="1" stroke-linejoin="round"/><path d="M24.3 147.2 C24.8 151.2 29.2 151.2 29.7 147.2 M24.3 154.2 C24.8 150.2 29.2 150.2 29.7 154.2" fill="none" stroke="#1c5a98" stroke-width="1.2"/><path d="M4.5 173 H12.5 L8.5 177.2 Z" fill="#333333"/><path d="M17 172.5 V170.5 Q17 169.5 18 169.5 H22 Q23 169.5 23 170.5 V172.5" fill="#fbe7b0" stroke="#d8a858" stroke-width="1"/><path d="M14.5 172.5 H24" stroke="#7a6a90" stroke-width="1"/><rect x="15.2" y="173" width="11.5" height="8.5" fill="#fde8a8"/><path d="M15.5 174 V181.5" stroke="#3a4ab8" stroke-width="1"/><path d="M18.4 176.3 H29.6 L25.9 181.6 H16 Z" fill="#b0dcfa" stroke="#2a3ab8" stroke-width="1" stroke-linejoin="round"/><path d="M24.3 168.2 C24.8 172.2 29.2 172.2 29.7 168.2 M24.3 175.2 C24.8 171.2 29.2 171.2 29.7 175.2" fill="none" stroke="#1c5a98" stroke-width="1.2"/><path d="M16 192 L20.2 196 L16 200 Z" fill="#333333"/><rect x="24" y="194" width="6.7" height="2" fill="#2a7ad0"/><rect x="24.8" y="196" width="8.2" height="2.6" fill="#30a060"/><path d="M26 197.3 H32" stroke="#a0e0b0" stroke-width="0.6"/><rect x="24" y="199" width="10" height="4" fill="#d87830" stroke="#b05a20" stroke-width="0.5"/><path d="M33 192.5 L36 192 L38.2 202.5 L35.5 203Z" fill="#f0b840" stroke="#d08a20" stroke-width="0.7"/><path d="M14 215 H22 L18 219.2 Z" fill="#333333"/><path d="M24.5 223.5 V214.5 Q24.5 213.5 25.5 213.5 H29 L30 215 H34.5 V217.5" fill="#f8e4a8" stroke="#b87a30" stroke-width="1"/><path d="M24.8 223.6 L28 217.8 H38.6 L35.3 223.6 Z" fill="#f8e2a0" stroke="#b87a30" stroke-width="1" stroke-linejoin="round"/><rect x="30" y="212.5" width="7.5" height="5.5" fill="#f0d8a0"/><path d="M32 211.5 V218.5 M35.5 211.5 V218.5 M29.5 214 H38 M29.5 217 H38" stroke="#6a4030" stroke-width="1.4"/><path d="M35.5 232.5 H42.5 L45.5 235.5 V245.5 H35.5 Z" fill="#f4f8fe" stroke="url(#docg)" stroke-width="1"/><path d="M42.5 232.8 V235.5 H45.2 Z" fill="#e4c070" stroke="#d0b070" stroke-width="0.6"/><path d="M37.2 235.5 H40.8 M37.2 237.5 H43.8 M37.2 239.5 H43.8 M37.2 241.5 H43.8 M37.2 243.5 H41.5" stroke="#6078b0" stroke-width="0.95"/><path d="M35.5 253.5 H42.5 L45.5 256.5 V266.5 H35.5 Z" fill="#f4f8fe" stroke="url(#docg)" stroke-width="1"/><path d="M42.5 253.8 V256.5 H45.2 Z" fill="#e4c070" stroke="#d0b070" stroke-width="0.6"/><path d="M37.2 256.5 H40.8 M37.2 258.5 H43.8 M37.2 260.5 H43.8 M37.2 262.5 H43.8 M37.2 264.5 H41.5" stroke="#6078b0" stroke-width="0.95"/><path d="M35.5 274.5 H42.5 L45.5 277.5 V287.5 H35.5 Z" fill="#f4f8fe" stroke="url(#docg)" stroke-width="1"/><path d="M42.5 274.8 V277.5 H45.2 Z" fill="#e4c070" stroke="#d0b070" stroke-width="0.6"/><path d="M37.2 277.5 H40.8 M37.2 279.5 H43.8 M37.2 281.5 H43.8 M37.2 283.5 H43.8 M37.2 285.5 H41.5" stroke="#6078b0" stroke-width="0.95"/><path d="M35.5 295.5 H42.5 L45.5 298.5 V308.5 H35.5 Z" fill="#f4f8fe" stroke="url(#docg)" stroke-width="1"/><path d="M42.5 295.8 V298.5 H45.2 Z" fill="#e4c070" stroke="#d0b070" stroke-width="0.6"/><path d="M37.2 298.5 H40.8 M37.2 300.5 H43.8 M37.2 302.5 H43.8 M37.2 304.5 H43.8 M37.2 306.5 H41.5" stroke="#6078b0" stroke-width="0.95"/><path d="M35.5 316.5 H42.5 L45.5 319.5 V329.5 H35.5 Z" fill="#f4f8fe" stroke="url(#docg)" stroke-width="1"/><path d="M42.5 316.8 V319.5 H45.2 Z" fill="#e4c070" stroke="#d0b070" stroke-width="0.6"/><path d="M37.2 319.5 H40.8 M37.2 321.5 H43.8 M37.2 323.5 H43.8 M37.2 325.5 H43.8 M37.2 327.5 H41.5" stroke="#6078b0" stroke-width="0.95"/><path d="M16 339 L20.2 343 L16 347 Z" fill="#333333"/><path d="M24.5 349.5 V340.5 Q24.5 339.5 25.5 339.5 H29 L30 341 H34.5 V343.5" fill="#f8e4a8" stroke="#b87a30" stroke-width="1"/><path d="M24.8 349.6 L28 343.8 H38.6 L35.3 349.6 Z" fill="#f8e2a0" stroke="#b87a30" stroke-width="1" stroke-linejoin="round"/><path d="M16 360 L20.2 364 L16 368 Z" fill="#333333"/><path d="M24.5 370.5 V361.5 Q24.5 360.5 25.5 360.5 H29 L30 362 H34.5 V364.5" fill="#f8e4a8" stroke="#b87a30" stroke-width="1"/><path d="M24.8 370.6 L28 364.8 H38.6 L35.3 370.6 Z" fill="#f8e2a0" stroke="#b87a30" stroke-width="1" stroke-linejoin="round"/><path d="M7 381 L11.2 385 L7 389 Z" fill="#333333"/><path d="M17 382.5 V380.5 Q17 379.5 18 379.5 H22 Q23 379.5 23 380.5 V382.5" fill="#fbe7b0" stroke="#d8a858" stroke-width="1"/><path d="M14.5 382.5 H24" stroke="#7a6a90" stroke-width="1"/><rect x="15.2" y="383" width="11.5" height="8.5" fill="#fde8a8"/><path d="M15.5 384 V391.5" stroke="#3a4ab8" stroke-width="1"/><path d="M18.4 386.3 H29.6 L25.9 391.6 H16 Z" fill="#b0dcfa" stroke="#2a3ab8" stroke-width="1" stroke-linejoin="round"/><path d="M24.3 378.2 C24.8 382.2 29.2 382.2 29.7 378.2 M24.3 385.2 C24.8 381.2 29.2 381.2 29.7 385.2" fill="none" stroke="#1c5a98" stroke-width="1.2"/><path d="M7 402 L11.2 406 L7 410 Z" fill="#333333"/><path d="M17 403.5 V401.5 Q17 400.5 18 400.5 H22 Q23 400.5 23 401.5 V403.5" fill="#fbe7b0" stroke="#d8a858" stroke-width="1"/><path d="M14.5 403.5 H24" stroke="#7a6a90" stroke-width="1"/><rect x="15.2" y="404" width="11.5" height="8.5" fill="#fde8a8"/><path d="M15.5 405 V412.5" stroke="#3a4ab8" stroke-width="1"/><path d="M18.4 407.3 H29.6 L25.9 412.6 H16 Z" fill="#b0dcfa" stroke="#2a3ab8" stroke-width="1" stroke-linejoin="round"/><path d="M24.3 399.2 C24.8 403.2 29.2 403.2 29.7 399.2 M24.3 406.2 C24.8 402.2 29.2 402.2 29.7 406.2" fill="none" stroke="#1c5a98" stroke-width="1.2"/><path d="M7 423 L11.2 427 L7 431 Z" fill="#333333"/><path d="M17 424.5 V422.5 Q17 421.5 18 421.5 H22 Q23 421.5 23 422.5 V424.5" fill="#fbe7b0" stroke="#d8a858" stroke-width="1"/><path d="M14.5 424.5 H24" stroke="#7a6a90" stroke-width="1"/><rect x="15.2" y="425" width="11.5" height="8.5" fill="#fde8a8"/><path d="M15.5 426 V433.5" stroke="#3a4ab8" stroke-width="1"/><path d="M18.4 428.3 H29.6 L25.9 433.6 H16 Z" fill="#b0dcfa" stroke="#2a3ab8" stroke-width="1" stroke-linejoin="round"/><path d="M24.5 427 V420.5 L27 424.5 L29.5 420.5 V427" fill="none" stroke="#1c5a98" stroke-width="1.1"/><path d="M7 444 L11.2 448 L7 452 Z" fill="#333333"/><path d="M17 445.5 V443.5 Q17 442.5 18 442.5 H22 Q23 442.5 23 443.5 V445.5" fill="#fbe7b0" stroke="#d8a858" stroke-width="1"/><path d="M14.5 445.5 H24" stroke="#7a6a90" stroke-width="1"/><rect x="15.2" y="446" width="11.5" height="8.5" fill="#fde8a8"/><path d="M15.5 447 V454.5" stroke="#3a4ab8" stroke-width="1"/><path d="M18.4 449.3 H29.6 L25.9 454.6 H16 Z" fill="#b0dcfa" stroke="#2a3ab8" stroke-width="1" stroke-linejoin="round"/><path d="M24.5 448 V441.5 L27 445.5 L29.5 441.5 V448" fill="none" stroke="#1c5a98" stroke-width="1.1"/><path d="M7 465 L11.2 469 L7 473 Z" fill="#333333"/><path d="M17 466.5 V464.5 Q17 463.5 18 463.5 H22 Q23 463.5 23 464.5 V466.5" fill="#fbe7b0" stroke="#d8a858" stroke-width="1"/><path d="M14.5 466.5 H24" stroke="#7a6a90" stroke-width="1"/><rect x="15.2" y="467" width="11.5" height="8.5" fill="#fde8a8"/><path d="M15.5 468 V475.5" stroke="#3a4ab8" stroke-width="1"/><path d="M18.4 470.3 H29.6 L25.9 475.6 H16 Z" fill="#b0dcfa" stroke="#2a3ab8" stroke-width="1" stroke-linejoin="round"/><path d="M24.5 469 V462.5 L27 466.5 L29.5 462.5 V469" fill="none" stroke="#1c5a98" stroke-width="1.1"/><path d="M7 486 L11.2 490 L7 494 Z" fill="#333333"/><path d="M17 487.5 V485.5 Q17 484.5 18 484.5 H22 Q23 484.5 23 485.5 V487.5" fill="#fbe7b0" stroke="#d8a858" stroke-width="1"/><path d="M14.5 487.5 H24" stroke="#7a6a90" stroke-width="1"/><rect x="15.2" y="488" width="11.5" height="8.5" fill="#fde8a8"/><path d="M15.5 489 V496.5" stroke="#3a4ab8" stroke-width="1"/><path d="M18.4 491.3 H29.6 L25.9 496.6 H16 Z" fill="#b0dcfa" stroke="#2a3ab8" stroke-width="1" stroke-linejoin="round"/><path d="M24.5 490 V483.5 L27 487.5 L29.5 483.5 V490" fill="none" stroke="#1c5a98" stroke-width="1.1"/><path d="M7 507 L11.2 511 L7 515 Z" fill="#333333"/><path d="M17 508.5 V506.5 Q17 505.5 18 505.5 H22 Q23 505.5 23 506.5 V508.5" fill="#fbe7b0" stroke="#d8a858" stroke-width="1"/><path d="M14.5 508.5 H24" stroke="#7a6a90" stroke-width="1"/><rect x="15.2" y="509" width="11.5" height="8.5" fill="#fde8a8"/><path d="M15.5 510 V517.5" stroke="#3a4ab8" stroke-width="1"/><path d="M18.4 512.3 H29.6 L25.9 517.6 H16 Z" fill="#b0dcfa" stroke="#2a3ab8" stroke-width="1" stroke-linejoin="round"/><path d="M24.5 511 V504.5 L27 508.5 L29.5 504.5 V511" fill="none" stroke="#1c5a98" stroke-width="1.1"/><path d="M7 528 L11.2 532 L7 536 Z" fill="#333333"/><path d="M17 529.5 V527.5 Q17 526.5 18 526.5 H22 Q23 526.5 23 527.5 V529.5" fill="#fbe7b0" stroke="#d8a858" stroke-width="1"/><path d="M14.5 529.5 H24" stroke="#7a6a90" stroke-width="1"/><rect x="15.2" y="530" width="11.5" height="8.5" fill="#fde8a8"/><path d="M15.5 531 V538.5" stroke="#3a4ab8" stroke-width="1"/><path d="M18.4 533.3 H29.6 L25.9 538.6 H16 Z" fill="#b0dcfa" stroke="#2a3ab8" stroke-width="1" stroke-linejoin="round"/><path d="M24.5 532 V525.5 L27 529.5 L29.5 525.5 V532" fill="none" stroke="#1c5a98" stroke-width="1.1"/><path d="M7 549 L11.2 553 L7 557 Z" fill="#333333"/><path d="M17 550.5 V548.5 Q17 547.5 18 547.5 H22 Q23 547.5 23 548.5 V550.5" fill="#fbe7b0" stroke="#d8a858" stroke-width="1"/><path d="M14.5 550.5 H24" stroke="#7a6a90" stroke-width="1"/><rect x="15.2" y="551" width="11.5" height="8.5" fill="#fde8a8"/><path d="M15.5 552 V559.5" stroke="#3a4ab8" stroke-width="1"/><path d="M18.4 554.3 H29.6 L25.9 559.6 H16 Z" fill="#b0dcfa" stroke="#2a3ab8" stroke-width="1" stroke-linejoin="round"/><path d="M24.5 553 V546.5 L27 550.5 L29.5 546.5 V553" fill="none" stroke="#1c5a98" stroke-width="1.1"/><path d="M7 570 L11.2 574 L7 578 Z" fill="#333333"/><path d="M17 571.5 V569.5 Q17 568.5 18 568.5 H22 Q23 568.5 23 569.5 V571.5" fill="#fbe7b0" stroke="#d8a858" stroke-width="1"/><path d="M14.5 571.5 H24" stroke="#7a6a90" stroke-width="1"/><rect x="15.2" y="572" width="11.5" height="8.5" fill="#fde8a8"/><path d="M15.5 573 V580.5" stroke="#3a4ab8" stroke-width="1"/><path d="M18.4 575.3 H29.6 L25.9 580.6 H16 Z" fill="#b0dcfa" stroke="#2a3ab8" stroke-width="1" stroke-linejoin="round"/><path d="M24.5 574 V567.5 L27 571.5 L29.5 567.5 V574" fill="none" stroke="#1c5a98" stroke-width="1.1"/><path d="M7 591 L11.2 595 L7 599 Z" fill="#333333"/><path d="M17 592.5 V590.5 Q17 589.5 18 589.5 H22 Q23 589.5 23 590.5 V592.5" fill="#fbe7b0" stroke="#d8a858" stroke-width="1"/><path d="M14.5 592.5 H24" stroke="#7a6a90" stroke-width="1"/><rect x="15.2" y="593" width="11.5" height="8.5" fill="#fde8a8"/><path d="M15.5 594 V601.5" stroke="#3a4ab8" stroke-width="1"/><path d="M18.4 596.3 H29.6 L25.9 601.6 H16 Z" fill="#b0dcfa" stroke="#2a3ab8" stroke-width="1" stroke-linejoin="round"/><path d="M24.5 595 V588.5 L27 592.5 L29.5 588.5 V595" fill="none" stroke="#1c5a98" stroke-width="1.1"/><path d="M7 612 L11.2 616 L7 620 Z" fill="#333333"/><path d="M17 613.5 V611.5 Q17 610.5 18 610.5 H22 Q23 610.5 23 611.5 V613.5" fill="#fbe7b0" stroke="#d8a858" stroke-width="1"/><path d="M14.5 613.5 H24" stroke="#7a6a90" stroke-width="1"/><rect x="15.2" y="614" width="11.5" height="8.5" fill="#fde8a8"/><path d="M15.5 615 V622.5" stroke="#3a4ab8" stroke-width="1"/><path d="M18.4 617.3 H29.6 L25.9 622.6 H16 Z" fill="#b0dcfa" stroke="#2a3ab8" stroke-width="1" stroke-linejoin="round"/><path d="M24.5 616 V609.5 L27 613.5 L29.5 609.5 V616" fill="none" stroke="#1c5a98" stroke-width="1.1"/><path d="M7 633 L11.2 637 L7 641 Z" fill="#333333"/><path d="M17 634.5 V632.5 Q17 631.5 18 631.5 H22 Q23 631.5 23 632.5 V634.5" fill="#fbe7b0" stroke="#d8a858" stroke-width="1"/><path d="M14.5 634.5 H24" stroke="#7a6a90" stroke-width="1"/><rect x="15.2" y="635" width="11.5" height="8.5" fill="#fde8a8"/><path d="M15.5 636 V643.5" stroke="#3a4ab8" stroke-width="1"/><path d="M18.4 638.3 H29.6 L25.9 643.6 H16 Z" fill="#b0dcfa" stroke="#2a3ab8" stroke-width="1" stroke-linejoin="round"/><path d="M24.5 637 V630.5 L27 634.5 L29.5 630.5 V637" fill="none" stroke="#1c5a98" stroke-width="1.1"/><path d="M7 654 L11.2 658 L7 662 Z" fill="#333333"/><path d="M17 655.5 V653.5 Q17 652.5 18 652.5 H22 Q23 652.5 23 653.5 V655.5" fill="#fbe7b0" stroke="#d8a858" stroke-width="1"/><path d="M14.5 655.5 H24" stroke="#7a6a90" stroke-width="1"/><rect x="15.2" y="656" width="11.5" height="8.5" fill="#fde8a8"/><path d="M15.5 657 V664.5" stroke="#3a4ab8" stroke-width="1"/><path d="M18.4 659.3 H29.6 L25.9 664.6 H16 Z" fill="#b0dcfa" stroke="#2a3ab8" stroke-width="1" stroke-linejoin="round"/><path d="M24.5 658 V651.5 L27 655.5 L29.5 651.5 V658" fill="none" stroke="#1c5a98" stroke-width="1.1"/><path d="M18 658.5 L21.8 665.3 H14.2 Z" fill="#f8c840" stroke="#c08020" stroke-width="1" stroke-linejoin="round"/><path d="M18 660.5 V663" stroke="#402000" stroke-width="1.1"/><path d="M7 675 L11.2 679 L7 683 Z" fill="#333333"/><path d="M17 676.5 V674.5 Q17 673.5 18 673.5 H22 Q23 673.5 23 674.5 V676.5" fill="#fbe7b0" stroke="#d8a858" stroke-width="1"/><path d="M14.5 676.5 H24" stroke="#7a6a90" stroke-width="1"/><rect x="15.2" y="677" width="11.5" height="8.5" fill="#fde8a8"/><path d="M15.5 678 V685.5" stroke="#3a4ab8" stroke-width="1"/><path d="M18.4 680.3 H29.6 L25.9 685.6 H16 Z" fill="#b0dcfa" stroke="#2a3ab8" stroke-width="1" stroke-linejoin="round"/><path d="M24.3 672.2 C24.8 676.2 29.2 676.2 29.7 672.2 M24.3 679.2 C24.8 675.2 29.2 675.2 29.7 679.2" fill="none" stroke="#1c5a98" stroke-width="1.2"/></g>
<g font-family="Liberation Mono" font-size="13.33px"><text x="401" y="135" fill="#7f0055" font-weight="700" xml:space="preserve">SkillDefinitionRepository</text><text x="609" y="135" fill="#222222" xml:space="preserve">CommNavigationObjects {</text><text x="433" y="165" fill="#7f0055" font-weight="700" xml:space="preserve">SkillDefinitionSet</text><text x="585" y="165" fill="#222222" xml:space="preserve">MovementSkills {</text><text x="465" y="195" fill="#3f7f5f" xml:space="preserve">/*</text><text x="473" y="210" fill="#3f7f5f" xml:space="preserve">* approach location (id, resolved using knowledge-base)</text><text x="473" y="225" fill="#3f7f5f" xml:space="preserve">*/</text><text x="465" y="240" fill="#7f0055" font-weight="700" xml:space="preserve">SkillDefinition</text><text x="593" y="240" fill="#222222" xml:space="preserve">moverobot {</text><text x="497" y="255" fill="#7f0055" font-weight="700" xml:space="preserve">in</text><text x="521" y="255" fill="#222222" xml:space="preserve">{</text><text x="529" y="270" fill="#222222" xml:space="preserve">location :</text><text x="617" y="270" fill="#7f0055" font-weight="700" xml:space="preserve">Int32</text><text x="497" y="285" fill="#222222" xml:space="preserve">}</text><text x="497" y="300" fill="#7f0055" font-weight="700" xml:space="preserve">results</text><text x="561" y="300" fill="#222222" xml:space="preserve">{</text><text x="529" y="315" fill="#7f0055" font-weight="700" xml:space="preserve">ERROR</text><text x="577" y="315" fill="#7f0055" font-weight="700" xml:space="preserve">value</text><text x="625" y="315" fill="#222222" xml:space="preserve">=</text><text x="641" y="315" fill="#2a00ff" xml:space="preserve">&quot;UNKNOWN LOCATION&quot;</text><text x="785" y="315" fill="#222222" xml:space="preserve">;</text><text x="529" y="330" fill="#7f0055" font-weight="700" xml:space="preserve">ERROR</text><text x="577" y="330" fill="#7f0055" font-weight="700" xml:space="preserve">value</text><text x="625" y="330" fill="#222222" xml:space="preserve">=</text><text x="641" y="330" fill="#2a00ff" xml:space="preserve">&quot;ROBOT BLOCKED&quot;</text><text x="761" y="330" fill="#222222" xml:space="preserve">;</text><text x="529" y="345" fill="#7f0055" font-weight="700" xml:space="preserve">SUCCESS</text><text x="593" y="345" fill="#7f0055" font-weight="700" xml:space="preserve">value</text><text x="641" y="345" fill="#222222" xml:space="preserve">=</text><text x="657" y="345" fill="#2a00ff" xml:space="preserve">&quot;OK&quot;</text><text x="689" y="345" fill="#222222" xml:space="preserve">;</text><text x="529" y="360" fill="#7f0055" font-weight="700" xml:space="preserve">SUCCESS</text><text x="593" y="360" fill="#7f0055" font-weight="700" xml:space="preserve">value</text><text x="641" y="360" fill="#222222" xml:space="preserve">=</text><text x="657" y="360" fill="#2a00ff" xml:space="preserve">&quot;&quot;</text><text x="673" y="360" fill="#222222" xml:space="preserve">;</text><text x="497" y="375" fill="#222222" xml:space="preserve">}</text><text x="465" y="390" fill="#222222" xml:space="preserve">}</text><text x="465" y="420" fill="#3f7f5f" xml:space="preserve">/*</text><text x="473" y="435" fill="#3f7f5f" xml:space="preserve">* rotate the robot according to the locations setup (id, resolved using knowledge-base)</text><text x="473" y="450" fill="#3f7f5f" xml:space="preserve">*/</text><text x="465" y="465" fill="#7f0055" font-weight="700" xml:space="preserve">SkillDefinition</text><text x="593" y="465" fill="#222222" xml:space="preserve">orientaterobot{</text><text x="497" y="480" fill="#7f0055" font-weight="700" xml:space="preserve">in</text><text x="521" y="480" fill="#222222" xml:space="preserve">{</text><text x="529" y="495" fill="#222222" xml:space="preserve">location :</text><text x="617" y="495" fill="#7f0055" font-weight="700" xml:space="preserve">Int32</text><text x="497" y="510" fill="#222222" xml:space="preserve">}</text><text x="497" y="525" fill="#7f0055" font-weight="700" xml:space="preserve">results</text><text x="561" y="525" fill="#222222" xml:space="preserve">{</text><text x="529" y="540" fill="#7f0055" font-weight="700" xml:space="preserve">ERROR</text><text x="577" y="540" fill="#7f0055" font-weight="700" xml:space="preserve">value</text><text x="625" y="540" fill="#222222" xml:space="preserve">=</text><text x="641" y="540" fill="#2a00ff" xml:space="preserve">&quot;UNKNOWN LOCATION&quot;</text><text x="785" y="540" fill="#222222" xml:space="preserve">;</text><text x="529" y="555" fill="#7f0055" font-weight="700" xml:space="preserve">ERROR</text><text x="577" y="555" fill="#7f0055" font-weight="700" xml:space="preserve">value</text><text x="625" y="555" fill="#222222" xml:space="preserve">=</text><text x="641" y="555" fill="#2a00ff" xml:space="preserve">&quot;ROBOT BLOCKED&quot;</text><text x="761" y="555" fill="#222222" xml:space="preserve">;</text><text x="529" y="570" fill="#7f0055" font-weight="700" xml:space="preserve">SUCCESS</text><text x="593" y="570" fill="#7f0055" font-weight="700" xml:space="preserve">value</text><text x="641" y="570" fill="#222222" xml:space="preserve">=</text><text x="657" y="570" fill="#2a00ff" xml:space="preserve">&quot;OK&quot;</text><text x="689" y="570" fill="#222222" xml:space="preserve">;</text><text x="529" y="585" fill="#7f0055" font-weight="700" xml:space="preserve">SUCCESS</text><text x="593" y="585" fill="#7f0055" font-weight="700" xml:space="preserve">value</text><text x="641" y="585" fill="#222222" xml:space="preserve">=</text><text x="657" y="585" fill="#2a00ff" xml:space="preserve">&quot;&quot;</text><text x="673" y="585" fill="#222222" xml:space="preserve">;</text><text x="497" y="600" fill="#222222" xml:space="preserve">}</text><text x="465" y="615" fill="#222222" xml:space="preserve">}</text><text x="433" y="630" fill="#222222" xml:space="preserve">}</text><text x="401" y="645" fill="#222222" xml:space="preserve">}</text></g>
<circle cx="393.4" cy="130.4" r="4.1" fill="#d9e8f4" stroke="#b0bfcc" stroke-width="0.9"/><rect x="391" y="129.9" width="4.8" height="1.1" fill="#6a7888"/>
<circle cx="393.4" cy="160.4" r="4.1" fill="#d9e8f4" stroke="#b0bfcc" stroke-width="0.9"/><rect x="391" y="159.9" width="4.8" height="1.1" fill="#6a7888"/>
<circle cx="393.4" cy="190.4" r="4.1" fill="#d9e8f4" stroke="#b0bfcc" stroke-width="0.9"/><rect x="391" y="189.9" width="4.8" height="1.1" fill="#6a7888"/>
<circle cx="393.4" cy="235.4" r="4.1" fill="#d9e8f4" stroke="#b0bfcc" stroke-width="0.9"/><rect x="391" y="234.9" width="4.8" height="1.1" fill="#6a7888"/>
<circle cx="393.4" cy="415.4" r="4.1" fill="#d9e8f4" stroke="#b0bfcc" stroke-width="0.9"/><rect x="391" y="414.9" width="4.8" height="1.1" fill="#6a7888"/>
<circle cx="393.4" cy="460.4" r="4.1" fill="#d9e8f4" stroke="#b0bfcc" stroke-width="0.9"/><rect x="391" y="459.9" width="4.8" height="1.1" fill="#6a7888"/>
<text x="3.5" y="694" font-family="Liberation Sans" font-size="15px" font-weight="400" fill="#3c3c3c" letter-spacing="0.270" xml:space="preserve">CommNavigationObjects.skills - CommNavigationObjects/model</text>
<text x="21.5" y="19" font-family="Liberation Sans" font-size="15px" font-weight="700" fill="#8d8b86" letter-spacing="0.093" xml:space="preserve">runtime-oxygen-tc-v3.4 - CommNavigationObjects/model/CommNavigationObjects.skills - Eclipse Platform</text>
<text x="5.5" y="46" font-family="Liberation Sans" font-size="15px" font-weight="400" fill="#dad6cd" letter-spacing="-0.293" xml:space="preserve">File</text>
<text x="39.5" y="46" font-family="Liberation Sans" font-size="15px" font-weight="400" fill="#dad6cd" letter-spacing="0.260" xml:space="preserve">Edit</text>
<text x="77" y="46" font-family="Liberation Sans" font-size="15px" font-weight="400" fill="#dad6cd" letter-spacing="-0.139" xml:space="preserve">Source</text>
<text x="134.4" y="46" font-family="Liberation Sans" font-size="15px" font-weight="400" fill="#dad6cd" letter-spacing="0.200" xml:space="preserve">Refactor</text>
<text x="203.4" y="46" font-family="Liberation Sans" font-size="15px" font-weight="400" fill="#dad6cd" letter-spacing="0.287" xml:space="preserve">Navigate</text>
<text x="275.3" y="46" font-family="Liberation Sans" font-size="15px" font-weight="400" fill="#dad6cd" letter-spacing="-0.472" xml:space="preserve">Search</text>
<text x="331" y="46" font-family="Liberation Sans" font-size="15px" font-weight="400" fill="#dad6cd" letter-spacing="0.259" xml:space="preserve">Project</text>
<text x="420" y="46" font-family="Liberation Sans" font-size="15px" font-weight="400" fill="#dad6cd" letter-spacing="0.194" xml:space="preserve">Model Converters</text>
<text x="582.2" y="46" font-family="Liberation Sans" font-size="15px" font-weight="400" fill="#dad6cd" letter-spacing="-0.152" xml:space="preserve">SmartMDSD</text>
<text x="676" y="46" font-family="Liberation Sans" font-size="15px" font-weight="400" fill="#dad6cd" letter-spacing="-0.444" xml:space="preserve">Run</text>
<text x="713" y="46" font-family="Liberation Sans" font-size="15px" font-weight="400" fill="#dad6cd" letter-spacing="0.507" xml:space="preserve">Window</text>
<text x="780.3" y="46" font-family="Liberation Sans" font-size="15px" font-weight="400" fill="#dad6cd" letter-spacing="0.085" xml:space="preserve">Help</text>
<text x="26" y="113" font-family="Liberation Sans" font-size="15px" font-weight="400" fill="#2e2e2e" letter-spacing="0.037" xml:space="preserve">Package Explorer</text>
<text x="32.2" y="139" font-family="Liberation Sans" font-size="15.5px" font-weight="400" fill="#333333" letter-spacing="-0.256" xml:space="preserve" clip-path="url(#treeclip)">CommBasicObjects</text>
<text x="32.2" y="160" font-family="Liberation Sans" font-size="15.5px" font-weight="400" fill="#333333" letter-spacing="-0.046" xml:space="preserve" clip-path="url(#treeclip)">CommLocalizationObjects</text>
<text x="32.2" y="181" font-family="Liberation Sans" font-size="15.5px" font-weight="400" fill="#333333" letter-spacing="0.027" xml:space="preserve" clip-path="url(#treeclip)">CommNavigationObjects</text>
<text x="41.1" y="202" font-family="Liberation Sans" font-size="15.5px" font-weight="400" fill="#333333" letter-spacing="-0.464" xml:space="preserve" clip-path="url(#treeclip)">JRE System Library</text>
<text x="41.1" y="223" font-family="Liberation Sans" font-size="15.5px" font-weight="400" fill="#333333" letter-spacing="0.156" xml:space="preserve" clip-path="url(#treeclip)">model</text>
<text x="50.6" y="244" font-family="Liberation Sans" font-size="15.5px" font-weight="400" fill="#333333" letter-spacing="-0.047" xml:space="preserve" clip-path="url(#treeclip)">CommNavigationObjects.modes</text>
<text x="50.6" y="265" font-family="Liberation Sans" font-size="15.5px" font-weight="400" fill="#333333" letter-spacing="0.015" xml:space="preserve" clip-path="url(#treeclip)">CommNavigationObjects.parameters</text>
<text x="50.6" y="286" font-family="Liberation Sans" font-size="15.5px" font-weight="400" fill="#333333" letter-spacing="-0.069" xml:space="preserve" clip-path="url(#treeclip)">CommNavigationObjects.services</text>
<text x="50.6" y="307" font-family="Liberation Sans" font-size="15.5px" font-weight="400" fill="#f8f8f8" letter-spacing="0.025" xml:space="preserve" clip-path="url(#treeclip)">CommNavigationObjects.skills</text>
<text x="50.6" y="328" font-family="Liberation Sans" font-size="15.5px" font-weight="400" fill="#333333" letter-spacing="-0.003" xml:space="preserve" clip-path="url(#treeclip)">CommNavigationObjects.types</text>
<text x="41.1" y="349" font-family="Liberation Sans" font-size="15.5px" font-weight="400" fill="#333333" letter-spacing="-0.167" xml:space="preserve" clip-path="url(#treeclip)">opcua</text>
<text x="41.1" y="370" font-family="Liberation Sans" font-size="15.5px" font-weight="400" fill="#333333" letter-spacing="0.430" xml:space="preserve" clip-path="url(#treeclip)">smartsoft</text>
<text x="32.2" y="391" font-family="Liberation Sans" font-size="15.5px" font-weight="400" fill="#333333" letter-spacing="-0.002" xml:space="preserve" clip-path="url(#treeclip)">CommRobotinoObjects</text>
<text x="32.2" y="412" font-family="Liberation Sans" font-size="15.5px" font-weight="400" fill="#333333" letter-spacing="-0.150" xml:space="preserve" clip-path="url(#treeclip)">CommTrackingObjects</text>
<text x="32.2" y="433" font-family="Liberation Sans" font-size="15.5px" font-weight="400" fill="#333333" letter-spacing="-0.142" xml:space="preserve" clip-path="url(#treeclip)">ComponentFestoMPSDocking</text>
<text x="32.2" y="454" font-family="Liberation Sans" font-size="15.5px" font-weight="400" fill="#333333" letter-spacing="0.006" xml:space="preserve" clip-path="url(#treeclip)">ComponentFileMover</text>
<text x="32.2" y="475" font-family="Liberation Sans" font-size="15.5px" font-weight="400" fill="#333333" letter-spacing="0.032" xml:space="preserve" clip-path="url(#treeclip)">ComponentFileProvider</text>
<text x="32.2" y="496" font-family="Liberation Sans" font-size="15.5px" font-weight="400" fill="#333333" letter-spacing="-0.183" xml:space="preserve" clip-path="url(#treeclip)">ComponentKB</text>
<text x="32.2" y="517" font-family="Liberation Sans" font-size="15.5px" font-weight="400" fill="#333333" letter-spacing="0.084" xml:space="preserve" clip-path="url(#treeclip)">ComponentNavigationPlanner</text>
<text x="32.2" y="538" font-family="Liberation Sans" font-size="15.5px" font-weight="400" fill="#333333" letter-spacing="0.131" xml:space="preserve" clip-path="url(#treeclip)">ComponentPathNavigationClient</text>
<text x="32.2" y="559" font-family="Liberation Sans" font-size="15.5px" font-weight="400" fill="#333333" letter-spacing="0.128" xml:space="preserve" clip-path="url(#treeclip)">ComponentPurePursuitNavigation</text>
<text x="32.2" y="580" font-family="Liberation Sans" font-size="15.5px" font-weight="400" fill="#333333" letter-spacing="0.106" xml:space="preserve" clip-path="url(#treeclip)">ComponentRobotinoBatteryChargerDocking</text>
<text x="32.2" y="601" font-family="Liberation Sans" font-size="15.5px" font-weight="400" fill="#333333" letter-spacing="-0.175" xml:space="preserve" clip-path="url(#treeclip)">ComponentRobotinoConveyerBeltServer_OPCU</text>
<text x="32.2" y="622" font-family="Liberation Sans" font-size="15.5px" font-weight="400" fill="#333333" letter-spacing="-0.070" xml:space="preserve" clip-path="url(#treeclip)">ComponentRobotinoIRServer</text>
<text x="32.2" y="643" font-family="Liberation Sans" font-size="15.5px" font-weight="400" fill="#333333" letter-spacing="-0.171" xml:space="preserve" clip-path="url(#treeclip)">ComponentSimpleKB</text>
<text x="32.2" y="664" font-family="Liberation Sans" font-size="15.5px" font-weight="400" fill="#333333" letter-spacing="-0.314" xml:space="preserve" clip-path="url(#treeclip)">ComponentTCLSequencer</text>
<text x="32.2" y="685" font-family="Liberation Sans" font-size="15.5px" font-weight="400" fill="#333333" letter-spacing="0.000" xml:space="preserve" clip-path="url(#treeclip)">ComponentTest</text>
<text x="173.5" y="202" font-family="Liberation Sans" font-size="15.5px" font-weight="400" fill="#b08c50" letter-spacing="-0.220" xml:space="preserve" clip-path="url(#treeclip)">[java-8-openjdk-amd64]</text>
<text x="391" y="113" font-family="Liberation Sans" font-size="15px" font-weight="400" fill="#111111" letter-spacing="0.301" xml:space="preserve">CommNavigationObjects.skills</text>
<text x="651" y="113" font-family="Liberation Sans" font-size="15px" font-weight="400" fill="#3a3a3a" letter-spacing="0.089" xml:space="preserve">SmartCdlServer.skillRealization</text>
<text x="1053.5" y="78" font-family="Liberation Sans" font-size="15px" font-weight="400" fill="#8b8b8b" letter-spacing="-0.211" xml:space="preserve">Quick Access</text>
</svg>
</body></html>
